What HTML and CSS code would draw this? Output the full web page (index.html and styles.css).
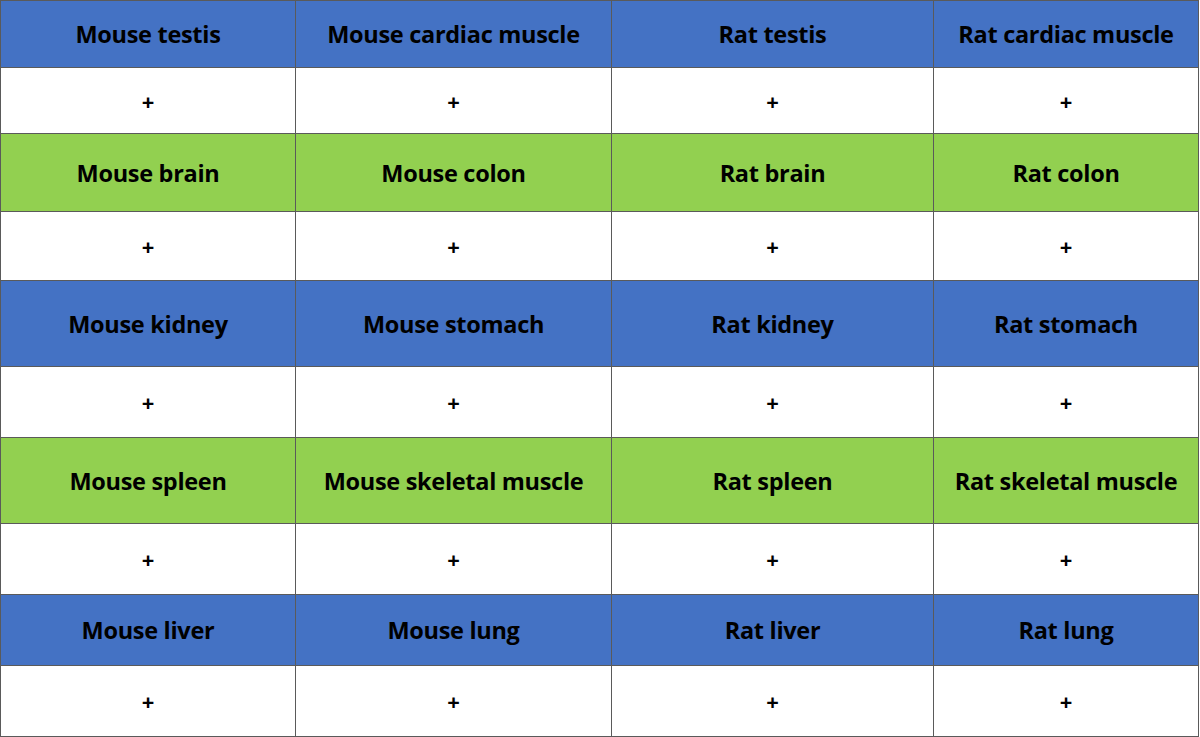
FILE: index.html
```html
<!DOCTYPE html>
<html>
<head>
<meta charset="utf-8">
<link rel="stylesheet" href="styles.css">
</head>
<body>
<div class="grid">
  <div class="cell blue">Mouse testis</div>
  <div class="cell blue">Mouse cardiac muscle</div>
  <div class="cell blue">Rat testis</div>
  <div class="cell blue">Rat cardiac muscle</div>
  <div class="cell plus">+</div><div class="cell plus">+</div><div class="cell plus">+</div><div class="cell plus">+</div>

  <div class="cell green">Mouse brain</div>
  <div class="cell green">Mouse colon</div>
  <div class="cell green">Rat brain</div>
  <div class="cell green">Rat colon</div>
  <div class="cell plus">+</div><div class="cell plus">+</div><div class="cell plus">+</div><div class="cell plus">+</div>

  <div class="cell blue">Mouse kidney</div>
  <div class="cell blue">Mouse stomach</div>
  <div class="cell blue">Rat kidney</div>
  <div class="cell blue">Rat stomach</div>
  <div class="cell plus">+</div><div class="cell plus">+</div><div class="cell plus">+</div><div class="cell plus">+</div>

  <div class="cell green">Mouse spleen</div>
  <div class="cell green">Mouse skeletal muscle</div>
  <div class="cell green">Rat spleen</div>
  <div class="cell green">Rat skeletal muscle</div>
  <div class="cell plus">+</div><div class="cell plus">+</div><div class="cell plus">+</div><div class="cell plus">+</div>

  <div class="cell blue">Mouse liver</div>
  <div class="cell blue">Mouse lung</div>
  <div class="cell blue">Rat liver</div>
  <div class="cell blue">Rat lung</div>
  <div class="cell plus">+</div><div class="cell plus">+</div><div class="cell plus">+</div><div class="cell plus">+</div>
</div>
</body>
</html>
```

FILE: styles.css
```css
html, body {
  margin: 0;
  padding: 0;
  background: #ffffff;
}

.grid {
  display: grid;
  grid-template-columns: 294px 315px 321px 264px;
  grid-template-rows: 66px 65px 77px 68px 85px 70px 85px 70px 70px 70px;
  gap: 1px;
  padding: 1px;
  width: 1199px;
  box-sizing: border-box;
  background: #5a5a5a;
  font-family: "Open Sans", "Liberation Sans", sans-serif;
  font-weight: 700;
  color: #000000;
}

.cell {
  display: flex;
  align-items: center;
  justify-content: center;
  font-size: 23.5px;
  letter-spacing: -0.3px;
  white-space: nowrap;
}

.blue {
  background: #4472c4;
}

.green {
  background: #92d050;
}

.plus {
  background: #ffffff;
  font-size: 22px;
}
```
